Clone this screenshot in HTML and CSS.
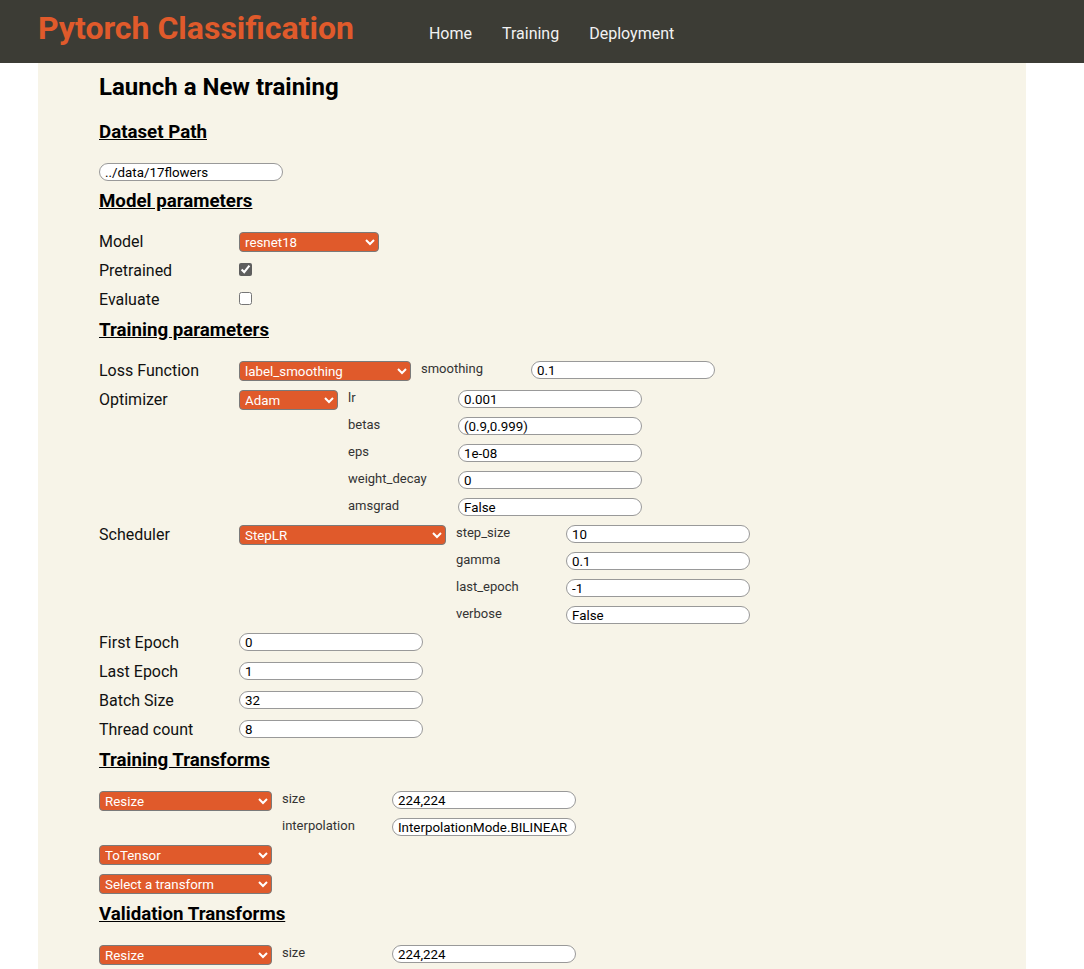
FILE: index.html
```html
<!DOCTYPE html>
<html lang="en">
<head>
<meta charset="utf-8">
<title>Pytorch Classification</title>
<link rel="stylesheet" href="styles.css">
</head>
<body>
<header class="topbar">
  <div class="brand">Pytorch Classification</div>
  <nav class="nav">
    <a href="#" class="nav-link">Home</a>
    <a href="#" class="nav-link">Training</a>
    <a href="#" class="nav-link">Deployment</a>
  </nav>
</header>
<main class="panel">
  <h1 class="page-title">Launch a New training</h1>
  <div class="form">
    <h2 class="section">Dataset Path</h2>
    <div class="row"><input class="field" type="text" value="../data/17flowers"></div>

    <h2 class="section">Model parameters</h2>
    <div class="row">
      <span class="label">Model</span>
      <select class="sel w-model"><option>resnet18</option></select>
    </div>
    <div class="row">
      <span class="label">Pretrained</span>
      <input class="check" type="checkbox" checked>
    </div>
    <div class="row">
      <span class="label">Evaluate</span>
      <input class="check" type="checkbox">
    </div>

    <h2 class="section">Training parameters</h2>
    <div class="row">
      <span class="label">Loss Function</span>
      <select class="sel w-loss"><option>label_smoothing</option></select>
      <div class="params">
        <span class="plabel">smoothing</span><input class="field" type="text" value="0.1">
      </div>
    </div>
    <div class="row">
      <span class="label">Optimizer</span>
      <select class="sel w-opt"><option>Adam</option></select>
      <div class="params">
        <span class="plabel">lr</span><input class="field" type="text" value="0.001">
        <span class="plabel">betas</span><input class="field" type="text" value="(0.9,0.999)">
        <span class="plabel">eps</span><input class="field" type="text" value="1e-08">
        <span class="plabel">weight_decay</span><input class="field" type="text" value="0">
        <span class="plabel">amsgrad</span><input class="field" type="text" value="False">
      </div>
    </div>
    <div class="row">
      <span class="label">Scheduler</span>
      <select class="sel w-sched"><option>StepLR</option></select>
      <div class="params">
        <span class="plabel">step_size</span><input class="field" type="text" value="10">
        <span class="plabel">gamma</span><input class="field" type="text" value="0.1">
        <span class="plabel">last_epoch</span><input class="field" type="text" value="-1">
        <span class="plabel">verbose</span><input class="field" type="text" value="False">
      </div>
    </div>
    <div class="row">
      <span class="label">First Epoch</span>
      <input class="field" type="text" value="0">
    </div>
    <div class="row">
      <span class="label">Last Epoch</span>
      <input class="field" type="text" value="1">
    </div>
    <div class="row">
      <span class="label">Batch Size</span>
      <input class="field" type="text" value="32">
    </div>
    <div class="row">
      <span class="label">Thread count</span>
      <input class="field" type="text" value="8">
    </div>

    <h2 class="section">Training Transforms</h2>
    <div class="row">
      <select class="sel w-tf"><option>Resize</option></select>
      <div class="params">
        <span class="plabel">size</span><input class="field" type="text" value="224,224">
        <span class="plabel">interpolation</span><input class="field" type="text" value="InterpolationMode.BILINEAR">
      </div>
    </div>
    <div class="row">
      <select class="sel w-tf"><option>ToTensor</option></select>
    </div>
    <div class="row">
      <select class="sel w-tf"><option>Select a transform</option></select>
    </div>

    <h2 class="section">Validation Transforms</h2>
    <div class="row">
      <select class="sel w-tf"><option>Resize</option></select>
      <div class="params">
        <span class="plabel">size</span><input class="field" type="text" value="224,224">
        <span class="plabel">interpolation</span><input class="field" type="text" value="InterpolationMode.BILINEAR">
      </div>
    </div>
    <div class="row">
      <select class="sel w-tf"><option>ToTensor</option></select>
    </div>
    <div class="row">
      <select class="sel w-tf"><option>Select a transform</option></select>
    </div>
  </div>
</main>
</body>
</html>
```

FILE: styles.css
```css
html, body {
  margin: 0;
  padding: 0;
  background: #ffffff;
}
body {
  font-family: Roboto, "Noto Sans", sans-serif;
  color: #111;
}
.topbar {
  height: 63px;
  box-sizing: border-box;
  background: #3c3c35;
  display: flex;
  align-items: baseline;
  padding: 9px 0 0 38px;
}
.brand {
  font-size: 32px;
  line-height: 38px;
  font-weight: 700;
  color: #e05a2b;
  margin-right: 75px;
}
.nav {
  display: flex;
  gap: 30px;
}
.nav-link {
  font-size: 16px;
  color: #f2f2f2;
  text-decoration: none;
}
.panel {
  margin: 0 58px 0 38px;
  background: #f7f4e8;
  padding: 10px 0 40px 61px;
  min-height: 1000px;
}
.page-title {
  font-size: 24px;
  line-height: 28px;
  font-weight: 700;
  margin: 0 0 20px 0;
  color: #000;
}
.form {
  display: flex;
  flex-direction: column;
  gap: 9px;
}
.section {
  font-size: 18.72px;
  line-height: 22px;
  font-weight: 700;
  margin: 0 0 11px 0;
  text-decoration: underline;
  color: #000;
}
.row {
  display: flex;
  align-items: flex-start;
}
.label {
  width: 140px;
  flex: none;
  font-size: 16px;
  line-height: 20px;
  color: #111;
}
.field {
  box-sizing: border-box;
  width: 184px;
  height: 18px;
  border: 1px solid #999;
  border-radius: 9px;
  background: #fff;
  font-family: Roboto, sans-serif;
  font-size: 13.333px;
  color: #000;
  padding: 0 0 0 5px;
  margin: 0;
  outline: none;
}
.sel {
  box-sizing: border-box;
  height: 20px;
  margin: 0;
  padding: 0 0 0 1px;
  border: 1px solid #7a7a7a;
  border-radius: 4px;
  background-color: #e05a2b;
  color: #fff;
  font-family: Roboto, sans-serif;
  font-size: 13.333px;
}
.w-model { width: 140px; }
.w-loss { width: 172px; }
.w-opt { width: 99px; }
.w-sched { width: 207px; }
.w-tf { width: 173px; }
.check {
  width: 13px;
  height: 13px;
  margin: 2px 0 0 0;
  accent-color: #5e5e5e;
}
.params {
  display: grid;
  grid-template-columns: 110px 184px;
  row-gap: 9px;
  margin-left: 10px;
}
.plabel {
  font-size: 13px;
  line-height: 16px;
  color: #333;
}
```
